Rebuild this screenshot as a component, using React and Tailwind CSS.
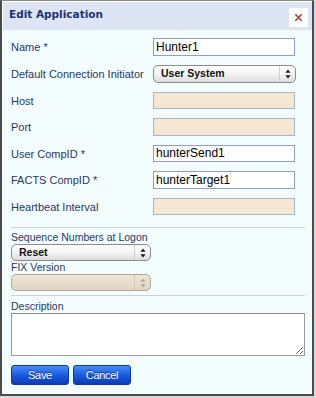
import React from "react";

const LABEL = "text-[11px] leading-[14px] text-[#27366a]";
const SUB_LABEL = "text-[10.5px] leading-[13px] text-[#27366a]";

function Arrows({ disabled }) {
  const c = disabled ? "#a8a8a8" : "#1a1a1a";
  return (
    <svg width="6" height="10" viewBox="0 0 6 10">
      <path d="M3 0.5 L5.6 3.8 L0.4 3.8 Z" fill={c} />
      <path d="M3 9.5 L5.6 6.2 L0.4 6.2 Z" fill={c} />
    </svg>
  );
}

function AquaSelect({ value, className, disabled }) {
  return (
    <div
      className={
        "flex items-stretch rounded-[5px] border " +
        (disabled
          ? "border-[#b1a898] bg-gradient-to-b from-[#eee6d6] to-[#e0d6c2] "
          : "border-[#8c8c8c] bg-gradient-to-b from-[#ffffff] via-[#f4f4f4] to-[#dcdcdc] ") +
        className
      }
    >
      <div className="flex-1 flex items-center pl-[7px] text-[10.5px] font-bold text-[#111]">{value}</div>
      <div className={"w-[16px] flex items-center justify-center border-l " + (disabled ? "border-[#cfc6b4]" : "border-[#d2d2d2]")}>
        <Arrows disabled={disabled} />
      </div>
    </div>
  );
}

function TextInput({ value, beige }) {
  return (
    <div
      className={
        "w-[142px] h-[17.5px] border flex items-center pl-[2px] text-[12px] text-black " +
        (beige ? "bg-[#f4e8d4] border-[#a9b4cc]" : "bg-white border-[#8d9fc6]")
      }
    >
      {value}
    </div>
  );
}

function Row({ label, children }) {
  return (
    <div className="flex items-start">
      <div className={"w-[142px] pt-[2px] " + LABEL}>{label}</div>
      {children}
    </div>
  );
}

export default function App() {
  return (
    <div className="w-[316px] h-[398px] bg-[#d9d9d9]" style={{ fontFamily: '"Liberation Sans", Arial, sans-serif' }}>
      <div className="w-[314px] h-[396px] border-2 border-[#4b4b4b] border-t-[#8a8a8a] border-t-[1px] bg-[#f4fdfd] flex flex-col">
        <div className="h-[29px] shrink-0 bg-[#dde4f4] border-t border-l border-white flex items-center justify-between pl-[6px] pr-[4px]">
          <span
            className="text-[10.5px] font-bold text-[#1a3478] pb-[2px]"
            style={{ fontFamily: '"DejaVu Sans", Verdana, sans-serif' }}
          >
            Edit Application
          </span>
          <div className="w-[19px] h-[19px] bg-white flex items-center justify-center mt-[3px]">
            <svg width="7" height="7" viewBox="0 0 7 7">
              <path d="M0.8 0.8 L6.2 6.2 M6.2 0.8 L0.8 6.2" stroke="#9a4a38" strokeWidth="1.6" strokeLinecap="round" />
            </svg>
          </div>
        </div>

        <div className="pl-[9px] pr-[7px] pt-[8px] flex flex-col">
          <div className="flex flex-col gap-[9px]">
            <Row label="Name *">
              <TextInput value="Hunter1" />
            </Row>
            <Row label="Default Connection Initiator">
              <AquaSelect value="User System" className="w-[143px] h-[18px]" />
            </Row>
            <Row label="Host">
              <TextInput beige />
            </Row>
            <Row label="Port">
              <TextInput beige />
            </Row>
            <Row label="User CompID *">
              <TextInput value="hunterSend1" />
            </Row>
            <Row label="FACTS CompID *">
              <TextInput value="hunterTarget1" />
            </Row>
            <Row label="Heartbeat Interval">
              <TextInput beige />
            </Row>
          </div>

          <div className="mt-[12px] h-px shrink-0 bg-[#cdd3d6] w-[294px]" />

          <div className={"mt-[3px] " + SUB_LABEL}>Sequence Numbers at Logon</div>
          <AquaSelect value="Reset" className="w-[140px] h-[17px] shrink-0" />
          <div className={SUB_LABEL}>FIX Version</div>
          <AquaSelect value="" disabled className="w-[140px] h-[17px] shrink-0" />

          <div className="mt-[4px] h-px shrink-0 bg-[#cdd3d6] w-[294px]" />

          <div className={"mt-[4px] " + SUB_LABEL}>Description</div>
          <textarea
            className="block w-[294px] h-[43px] shrink-0 bg-white border border-[#9c9c9c] border-t-[#8a8a8a] outline-none"
            defaultValue=""
          />

          <div className="flex gap-[4px] mt-[9px]">
            <button className="w-[58px] h-[20px] rounded-[3px] border border-[#0b3aa0] bg-gradient-to-b from-[#4a8cf6] via-[#1a5ce0] to-[#0a3cb4] text-white text-[11px] tracking-[-0.3px] [text-shadow:0_-1px_0_rgba(0,0,40,0.5)]">
              Save
            </button>
            <button className="w-[58px] h-[20px] rounded-[3px] border border-[#0b3aa0] bg-gradient-to-b from-[#4a8cf6] via-[#1a5ce0] to-[#0a3cb4] text-white text-[11px] tracking-[-0.3px] [text-shadow:0_-1px_0_rgba(0,0,40,0.5)]">
              Cancel
            </button>
          </div>
        </div>
      </div>
    </div>
  );
}
